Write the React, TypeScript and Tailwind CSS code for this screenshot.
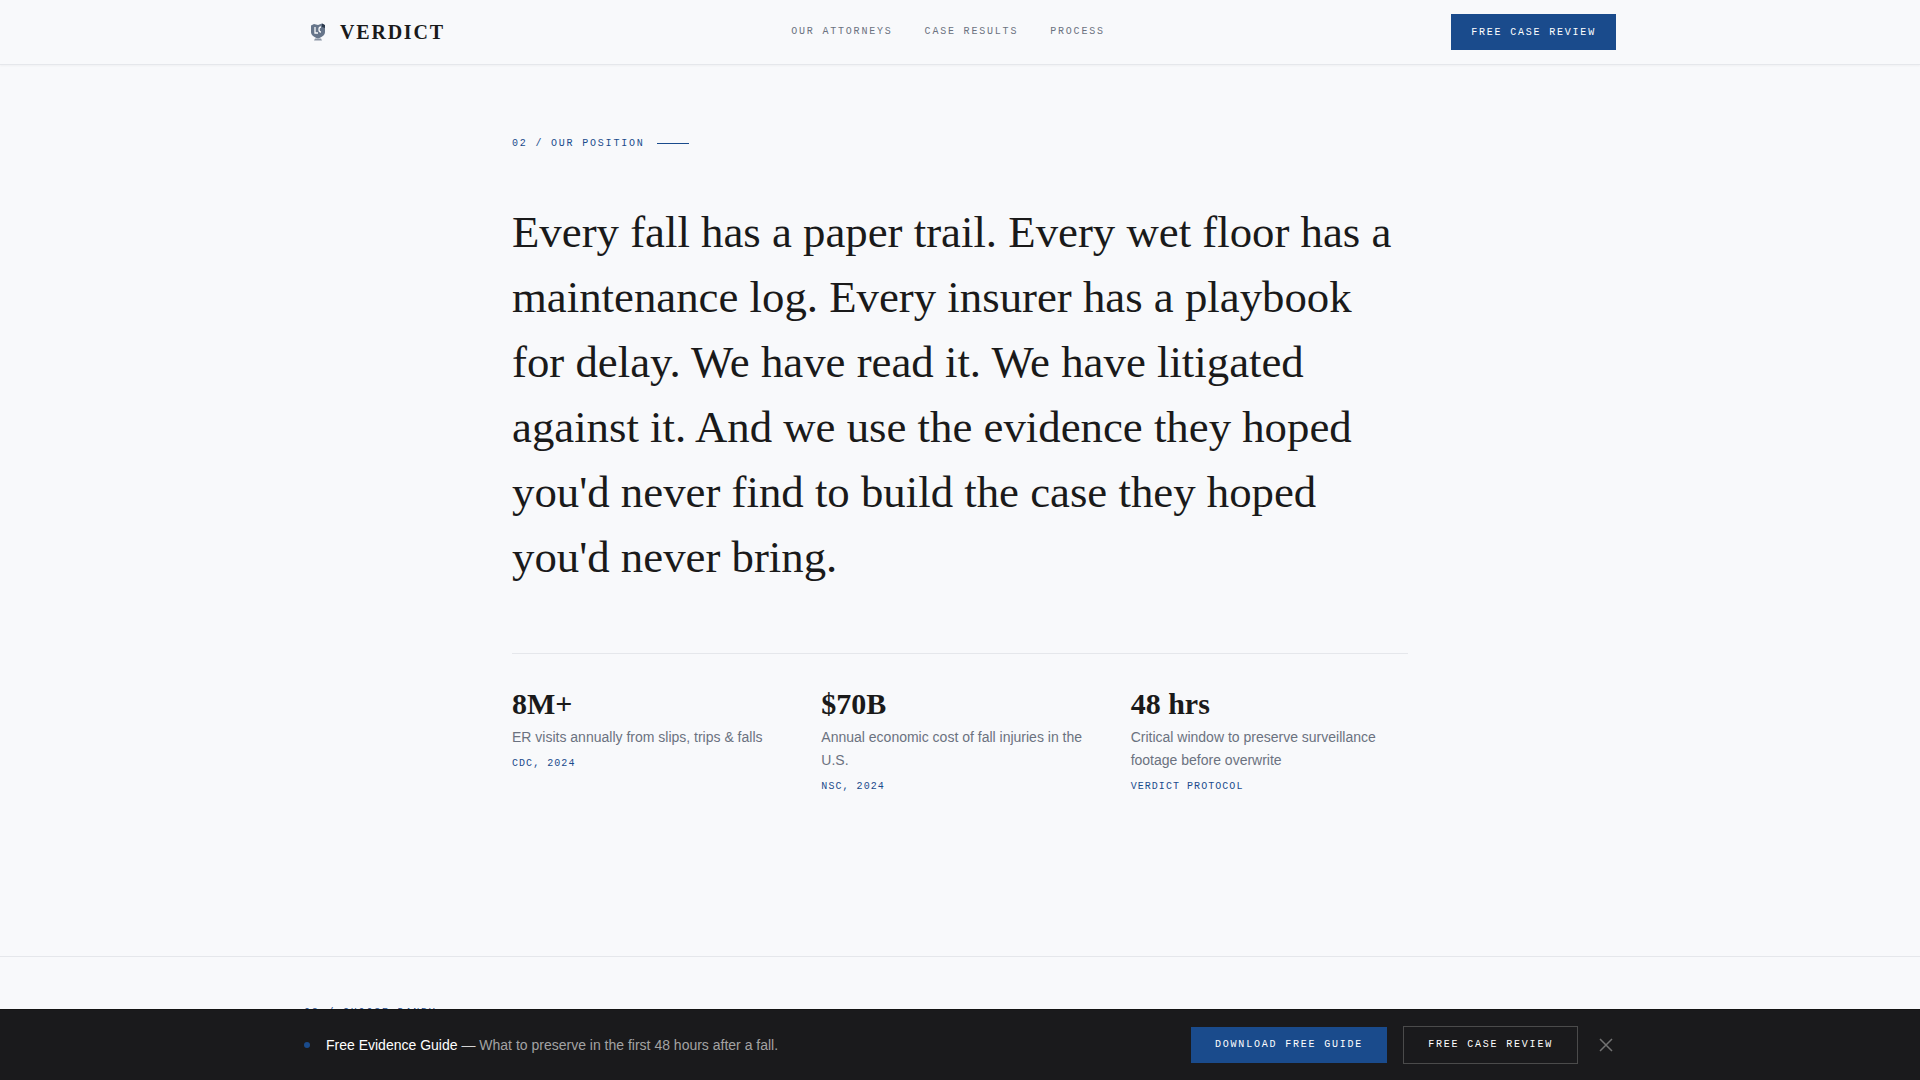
function Logo() {
  return (
    <svg viewBox="0 0 18 20" className="w-[18px] h-5 shrink-0" aria-hidden="true">
      <path d="M2 3.500 5 2l4 1 4-1.500 3 2v6.500c0 3-2.500 5-7 6.500-4.500-1.500-7-3.500-7-6.500z" fill="#66758a" />
      <path d="M6 5v6h3M12 5c-1.500 0-2 1-2 2.500s.5 2.500 2 2.500" fill="none" stroke="#f8f9fb" strokeWidth="1.300" />
      <path d="M6 16.500h6l1 2H5z" fill="#8b96a5" />
      <path d="M13 1.500l3 1.500v3l-3-1z" fill="#2c3a4d" />
    </svg>
  );
}

function Stat({ value, text, source }: { value: string; text: string; source: string }) {
  return (
    <div>
      <div className="font-['Liberation_Serif',serif] text-[30px] leading-[34px] font-bold text-[#1a1a1a]">{value}</div>
      <p className="mt-[5px] text-sm leading-[23px] text-[#6b7280]">{text}</p>
      <div className="mt-[7px] font-['Liberation_Mono',monospace] text-[10px] leading-[15px] tracking-[0.105em] text-[#1a4b8c]">{source}</div>
    </div>
  );
}

export default function App() {
  return (
    <div className="relative h-screen overflow-hidden bg-[#f8f9fb] font-['Liberation_Sans',sans-serif]">
      <header className="h-[65px] border-b border-[#e5e7eb] shadow-[0_1px_2px_rgba(0,0,0,0.04)]">
        <div className="mx-auto flex h-16 max-w-[1360px] items-center justify-between px-6">
          <div className="flex items-center gap-[13px] pl-[5px]">
            <Logo />
            <span className="font-['Liberation_Serif',serif] text-xl font-bold tracking-[0.09em] text-[#1a1a1a]">VERDICT</span>
          </div>
          <nav className="-mt-0.5 flex gap-8 font-['Liberation_Mono',monospace] text-[10px] tracking-[0.18em] text-[#6b7280]">
            <a>OUR ATTORNEYS</a>
            <a>CASE RESULTS</a>
            <a>PROCESS</a>
          </nav>
          <button className="h-9 bg-[#1a4b8c] px-5 font-['Liberation_Mono',monospace] text-[10px] tracking-[0.18em] text-white">FREE CASE REVIEW</button>
        </div>
      </header>

      <section className="h-[892px] border-b border-[#e5e7eb] pt-[71px]">
        <div className="mx-auto max-w-4xl">
          <div className="flex items-center gap-3 font-['Liberation_Mono',monospace] text-[10px] leading-[15px] tracking-[0.18em] text-[#1a4b8c]">
            <span>02 / OUR POSITION</span>
            <span className="h-px w-8 bg-[#1a4b8c]" />
          </div>
          <h2 className="mt-[49px] max-w-[880px] font-['Liberation_Serif',serif] text-[44.8px] leading-[1.45] font-normal text-[#1a1a1a]">
            Every fall has a paper trail. Every wet floor has a maintenance log. Every insurer has a playbook for delay. We have read it. We have litigated against it. And we use the evidence they hoped you'd never find to build the case they hoped you'd never bring.
          </h2>
          <div className="mt-[63px] grid grid-cols-3 gap-8 border-t border-[#e5e7eb] pt-[33px]">
            <Stat value="8M+" text="ER visits annually from slips, trips & falls" source="CDC, 2024" />
            <Stat value="$70B" text="Annual economic cost of fall injuries in the U.S." source="NSC, 2024" />
            <Stat value="48 hrs" text="Critical window to preserve surveillance footage before overwrite" source="VERDICT PROTOCOL" />
          </div>
        </div>
      </section>

      <div className="mx-auto max-w-[1360px] px-6 pt-12">
        <div className="font-['Liberation_Mono',monospace] text-[10px] leading-[15px] tracking-[0.18em] text-[#1a4b8c]">03 / CHOOSE DANBY</div>
      </div>

      <div className="absolute inset-x-0 bottom-0 h-[71px] border-t border-[#141414] bg-[#1a1a1c]">
        <div className="mx-auto flex h-full max-w-[1360px] items-center justify-between px-6">
          <div className="flex items-center gap-4">
            <span className="h-1.5 w-1.5 rounded-full bg-[#1a4b8c]" />
            <p className="text-sm text-[#a3a3a3]"><span className="text-white">Free Evidence Guide</span> <span className="text-[#d4d4d4]">—</span> What to preserve in the first 48 hours after a fall.</p>
          </div>
          <div className="flex items-center gap-4">
            <button className="h-9 bg-[#1a4b8c] px-6 pb-px font-['Liberation_Mono',monospace] text-[10px] tracking-[0.18em] text-white">DOWNLOAD FREE GUIDE</button>
            <button className="h-[38px] border border-[#4b4b4b] px-6 pb-px font-['Liberation_Mono',monospace] text-[10px] tracking-[0.18em] text-white">FREE CASE REVIEW</button>
            <button className="ml-1 mr-0.5 text-[#737373]">
              <svg viewBox="0 0 16 16" className="h-4 w-4" fill="none" stroke="currentColor" strokeWidth="1.500"><path d="M2 2l12 12M14 2 2 14" /></svg>
            </button>
          </div>
        </div>
      </div>
    </div>
  );
}
